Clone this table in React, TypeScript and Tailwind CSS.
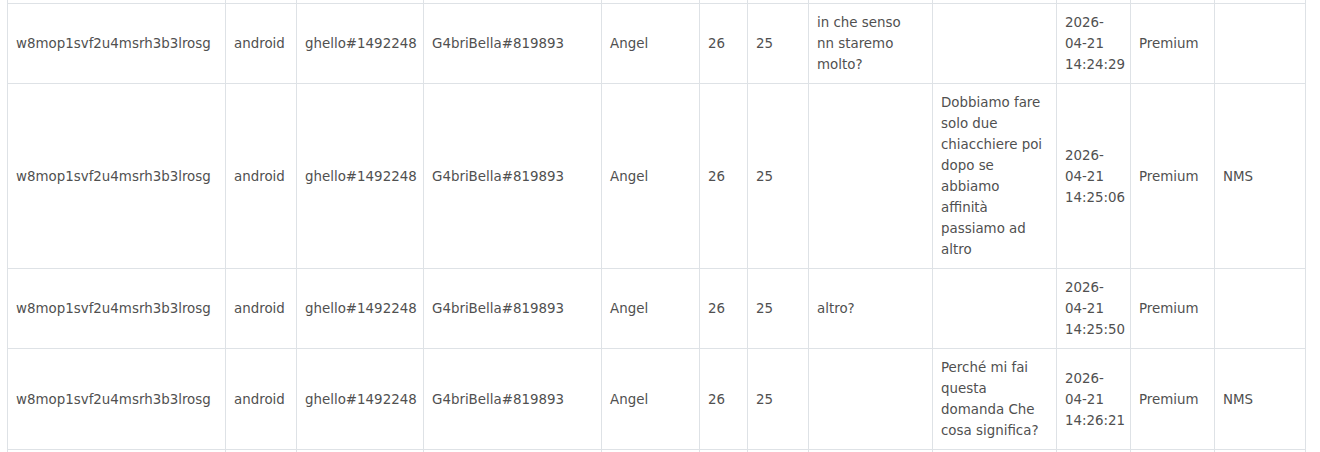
import React from 'react';

type Row = {
  id: string;
  platform: string;
  from: string;
  to: string;
  name: string;
  a: string;
  b: string;
  sent: string[];
  received: string[];
  date: string[];
  plan: string;
  tag: string;
};

const colWidths = [218, 71, 127, 178, 98, 48, 61, 124, 124, 74, 84, 91];

const base = {
  id: 'w8mop1svf2u4msrh3b3lrosg',
  platform: 'android',
  from: 'ghello#1492248',
  to: 'G4briBella#819893',
  name: 'Angel',
  a: '26',
  b: '25',
  plan: 'Premium',
};

const rows: Row[] = [
  { ...base, sent: ['in che senso', 'nn staremo', 'molto?'], received: [], date: ['2026-', '04-21', '14:24:29'], tag: '' },
  {
    ...base,
    sent: [],
    received: ['Dobbiamo fare', 'solo due', 'chiacchiere poi', 'dopo se', 'abbiamo', 'affinità', 'passiamo ad', 'altro'],
    date: ['2026-', '04-21', '14:25:06'],
    tag: 'NMS',
  },
  { ...base, sent: ['altro?'], received: [], date: ['2026-', '04-21', '14:25:50'], tag: '' },
  {
    ...base,
    sent: [],
    received: ['Perché mi fai', 'questa', 'domanda Che', 'cosa significa?'],
    date: ['2026-', '04-21', '14:26:21'],
    tag: 'NMS',
  },
];

const Lines = ({ lines }: { lines: string[] }) => (
  <>
    {lines.map((l, i) => (
      <React.Fragment key={i}>
        {i > 0 && <br />}
        {l}
      </React.Fragment>
    ))}
  </>
);

const cell = 'border border-[#dee2e6] px-2 py-2 align-middle whitespace-nowrap';

// rows above and below the visible part, only their borders show
const EdgeRow = () => (
  <tr>
    {colWidths.map((_, i) => (
      <td key={i} className={`${cell} h-[80px]`} />
    ))}
  </tr>
);

export default function App() {
  return (
    <div
      className="h-[452px] w-[1320px] overflow-hidden bg-white pl-[7px] text-[13.4px] leading-[21px] text-[#505050]"
      style={{ fontFamily: '"DejaVu Sans", sans-serif' }}
    >
      <table className="-mt-[77px] w-[1299px] table-fixed border-collapse">
        <colgroup>
          {colWidths.map((w, i) => (
            <col key={i} style={{ width: w }} />
          ))}
        </colgroup>
        <tbody>
          <EdgeRow />
          {rows.map((r, i) => (
            <tr key={i}>
              <td className={cell}>{r.id}</td>
              <td className={cell}>{r.platform}</td>
              <td className={cell}>{r.from}</td>
              <td className={cell}>{r.to}</td>
              <td className={cell}>{r.name}</td>
              <td className={cell}>{r.a}</td>
              <td className={cell}>{r.b}</td>
              <td className={cell}>
                <Lines lines={r.sent} />
              </td>
              <td className={cell}>
                <Lines lines={r.received} />
              </td>
              <td className={cell}>
                <Lines lines={r.date} />
              </td>
              <td className={cell}>{r.plan}</td>
              <td className={cell}>{r.tag}</td>
            </tr>
          ))}
          <EdgeRow />
        </tbody>
      </table>
    </div>
  );
}
